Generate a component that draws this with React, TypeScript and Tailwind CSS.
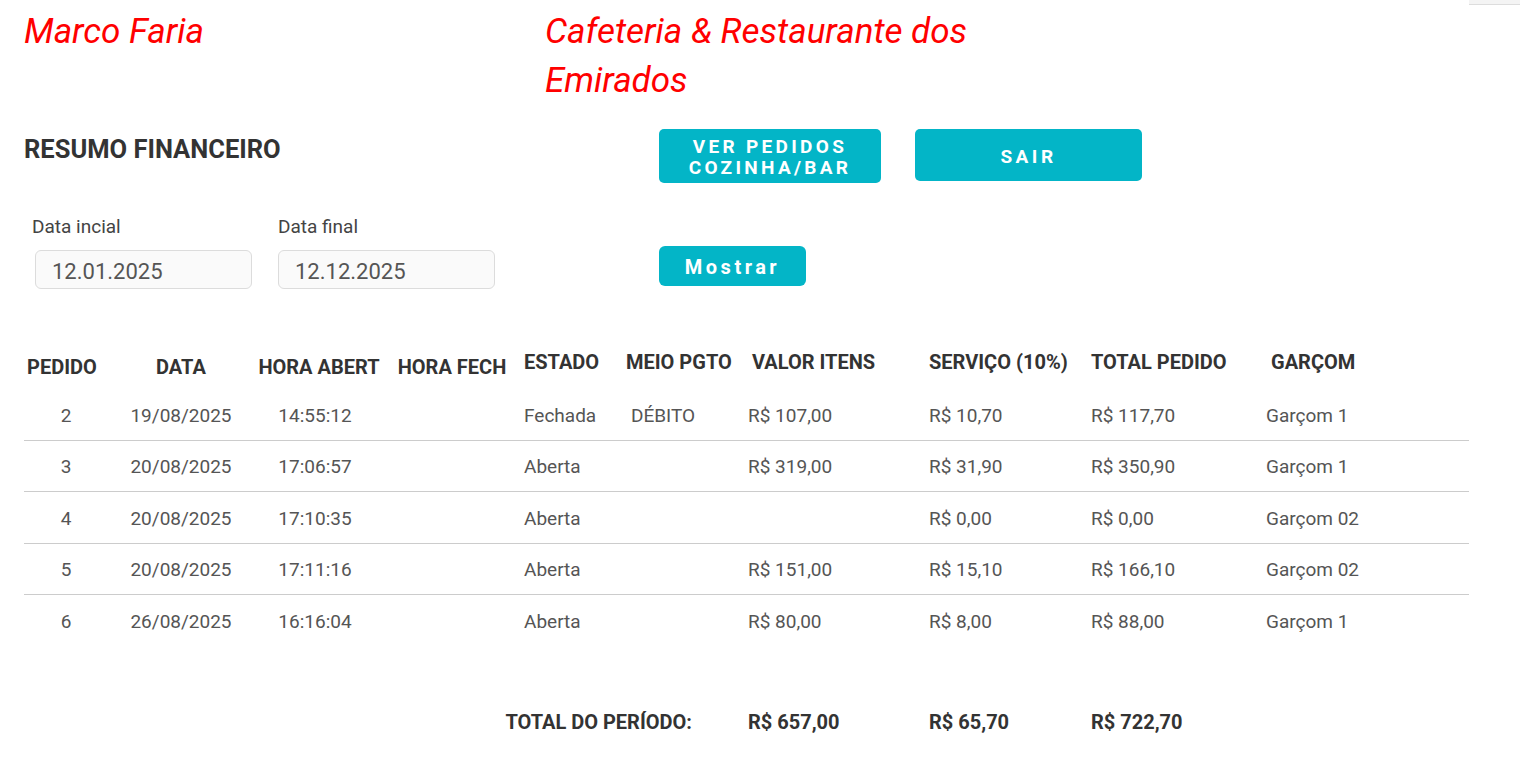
import React from "react";

interface Pedido {
  id: number;
  data: string;
  abertura: string;
  fechamento: string;
  estado: string;
  pagamento: string;
  valor: string;
  servico: string;
  total: string;
  garcom: string;
}

const pedidos: Pedido[] = [
  { id: 2, data: "19/08/2025", abertura: "14:55:12", fechamento: "", estado: "Fechada", pagamento: "DÉBITO", valor: "R$ 107,00", servico: "R$ 10,70", total: "R$ 117,70", garcom: "Garçom 1" },
  { id: 3, data: "20/08/2025", abertura: "17:06:57", fechamento: "", estado: "Aberta", pagamento: "", valor: "R$ 319,00", servico: "R$ 31,90", total: "R$ 350,90", garcom: "Garçom 1" },
  { id: 4, data: "20/08/2025", abertura: "17:10:35", fechamento: "", estado: "Aberta", pagamento: "", valor: "", servico: "R$ 0,00", total: "R$ 0,00", garcom: "Garçom 02" },
  { id: 5, data: "20/08/2025", abertura: "17:11:16", fechamento: "", estado: "Aberta", pagamento: "", valor: "R$ 151,00", servico: "R$ 15,10", total: "R$ 166,10", garcom: "Garçom 02" },
  { id: 6, data: "26/08/2025", abertura: "16:16:04", fechamento: "", estado: "Aberta", pagamento: "", valor: "R$ 80,00", servico: "R$ 8,00", total: "R$ 88,00", garcom: "Garçom 1" },
];

// column widths follow the reference: 24 -> 1469
const cols = "grid grid-cols-[88px_138px_138px_128px_104px_120px_181px_162px_175px_211px]";

const DateField = ({ label, value, inset }: { label: string; value: string; inset?: boolean }) => (
  <div className="flex w-[246px] flex-col">
    <label className="h-6 text-[19px] leading-6 text-[#444]">{label}</label>
    <div
      className={`mt-[11px] flex h-[39px] w-[217px] items-center rounded-md border border-[#dcdcdc] bg-[#fafafa] px-4 pt-[3px] text-[22px] text-[#555] ${
        inset ? "ml-[3px]" : ""
      }`}
    >
      {value}
    </div>
  </div>
);

export default function App() {
  return (
    <div className="relative min-h-[759px] bg-white pl-6 font-['Roboto',sans-serif]">
      <div className="absolute right-2 top-0 h-[5px] w-[51px] border-b border-[#dddddd] bg-[#f4f4f4]" />

      {/* Header */}
      <div className="flex pt-[7px]">
        <h1 className="w-[521px] text-[35px] italic leading-[49px] text-[#ff0000]">Marco Faria</h1>
        <h2 className="w-[440px] text-[35px] italic leading-[49px] text-[#ff0000]">
          Cafeteria &amp; Restaurante dos Emirados
        </h2>
      </div>

      {/* Title + actions */}
      <div className="mt-[24px] flex items-start">
        <h3 className="w-[635px] pt-[5px] text-[25.5px] font-bold leading-[30px] text-[#333]">RESUMO FINANCEIRO</h3>
        <button className="flex h-[54px] w-[222px] flex-col items-center justify-center rounded-[5px] bg-[#03b5c7] pt-[2px] text-[19px] font-bold leading-[21px] tracking-[3.3px] text-white">
          <span>VER PEDIDOS</span>
          <span>COZINHA/BAR</span>
        </button>
        <button className="ml-[34px] h-[52px] w-[227px] rounded-[5px] bg-[#03b5c7] pt-1 text-[19px] font-bold tracking-[3.5px] text-white">
          SAIR
        </button>
      </div>

      {/* Filters */}
      <div className="mt-[32px] flex items-start pl-2">
        <DateField label="Data incial" value="12.01.2025" inset />
        <DateField label="Data final" value="12.12.2025" />
        <button className="ml-[135px] mt-[31px] h-[40px] w-[147px] rounded-md bg-[#03b5c7] pt-[2px] text-[20px] font-bold tracking-[3.5px] text-white">
          Mostrar
        </button>
      </div>

      {/* Table */}
      <div className="mt-[51px] w-[1445px]">
        <div className={`${cols} h-[49px] text-[20px] font-bold text-[#333]`}>
          <div className="pl-[3px] pt-[12px]">PEDIDO</div>
          <div className="pt-[12px] text-center">DATA</div>
          <div className="pt-[12px] text-center">HORA ABERT</div>
          <div className="pt-[12px] text-center">HORA FECH</div>
          <div className="pl-2 pt-[7px]">ESTADO</div>
          <div className="pl-[6px] pt-[7px]">MEIO PGTO</div>
          <div className="pl-3 pt-[7px]">VALOR ITENS</div>
          <div className="pl-2 pt-[7px]">SERVIÇO (10%)</div>
          <div className="pl-2 pt-[7px]">TOTAL PEDIDO</div>
          <div className="pl-[13px] pt-[7px]">GARÇOM</div>
        </div>

        {pedidos.map((p, i) => (
          <div
            key={p.id}
            className={`${cols} h-[51.5px] items-center pt-[3px] text-[19px] text-[#555] ${
              i < pedidos.length - 1 ? "border-b border-[#cccccc]" : ""
            }`}
          >
            <div className="pr-1 text-center">{p.id}</div>
            <div className="text-center">{p.data}</div>
            <div className="pr-2 text-center">{p.abertura}</div>
            <div className="text-center">{p.fechamento}</div>
            <div className="pl-2">{p.estado}</div>
            <div className="pl-[11px]">{p.pagamento}</div>
            <div className="pl-2">{p.valor}</div>
            <div className="pl-2">{p.servico}</div>
            <div className="pl-2">{p.total}</div>
            <div className="pl-2">{p.garcom}</div>
          </div>
        ))}

        {/* Totals */}
        <div className={`${cols} mt-[50px] h-[51px] items-center text-[20px] font-bold text-[#333]`}>
          <div className="col-span-3" />
          <div className="col-span-3 pr-[48px] text-right">TOTAL DO PERÍODO:</div>
          <div className="pl-2">R$ 657,00</div>
          <div className="pl-2">R$ 65,70</div>
          <div className="pl-2">R$ 722,70</div>
          <div />
        </div>
      </div>
    </div>
  );
}
